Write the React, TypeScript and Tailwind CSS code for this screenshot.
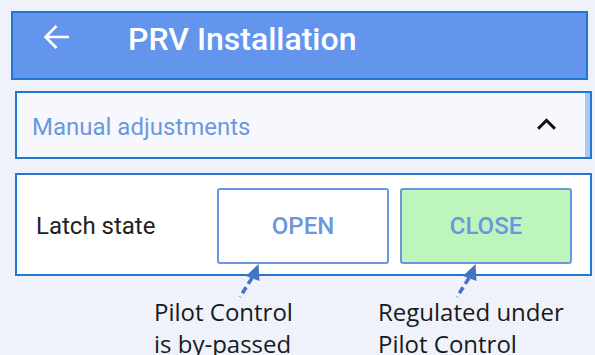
import React from "react";

export default function App() {
  return (
    <div
      className="relative w-[595px] h-[355px] overflow-hidden bg-[#eff2fa] pt-[11px]"
      style={{ fontFamily: "Roboto, 'Liberation Sans', sans-serif" }}
    >
      {/* Header */}
      <div className="ml-[11px] w-[577px] h-[69px] bg-[#6495ed] border-2 border-[#1f78d1] flex items-start pt-[8px] pl-[30px]">
        <svg width="26" height="24" viewBox="0 0 26 24" className="mt-[4px] shrink-0">
          <path d="M26 12H2.5M13.5 1L2.5 12L13.5 23" fill="none" stroke="#ffffff" strokeWidth="2.6" />
        </svg>
        <div className="ml-[59px] text-[32px] leading-[37px] font-medium text-white">PRV Installation</div>
      </div>

      {/* Manual adjustments */}
      <div className="mt-[11px] ml-[15px] w-[577px] h-[68px] bg-[#f7f8fd] border-2 border-[#1f78d1] flex items-center pl-[15px]">
        <div className="pt-[4px] text-[24px] leading-[28px] text-[#6a98e0]">Manual adjustments</div>
        <div className="flex-1" />
        <svg width="19" height="12" viewBox="6 8 12 7.41" className="mb-[3px] shrink-0">
          <path d="M12 8l-6 6 1.41 1.41L12 10.83l4.59 4.58L18 14z" fill="#111111" />
        </svg>
        <div className="ml-[29px] w-[5px] h-full bg-[#aec6f0]" />
      </div>

      {/* Latch state */}
      <div className="mt-[14px] ml-[15px] w-[577px] h-[103px] bg-white border-2 border-[#1f78d1] flex items-center pl-[19px] pr-[18px] pt-[3px]">
        <div className="text-[24px] leading-[28px] text-[#222222]">Latch state</div>
        <div className="flex-1" />
        <div className="flex gap-[11px]">
          <div className="w-[172px] h-[76px] border-2 border-[#6b97de] rounded-[3px] bg-white flex items-center justify-center text-[24px] font-medium text-[#6b97de]">
            OPEN
          </div>
          <div className="w-[172px] h-[76px] border-2 border-[#6b97de] rounded-[3px] bg-[#bdf5bd] flex items-center justify-center text-[24px] font-medium text-[#6b97de]">
            CLOSE
          </div>
        </div>
      </div>

      {/* Annotations */}
      <div
        className="mt-[20px] flex text-[24px] leading-[32px] text-[#1a1a1a]"
        style={{ fontFamily: "'Open Sans', 'Noto Sans', sans-serif" }}
      >
        <div className="ml-[154px] w-[224px]">
          <div>Pilot Control</div>
          <div>is by-passed</div>
        </div>
        <div>
          <div>Regulated under</div>
          <div>Pilot Control</div>
        </div>
      </div>

      <svg className="absolute left-0 top-0 pointer-events-none" width="595" height="355" viewBox="0 0 595 355">
        <polygon points="258.5,264 246,276 259.5,281" fill="#4472c4" />
        <line x1="252" y1="278" x2="240" y2="297" stroke="#4472c4" strokeWidth="3.5" strokeDasharray="7 4" />
        <polygon points="475.5,264 463,276 476.5,281" fill="#4472c4" />
        <line x1="469" y1="278" x2="457" y2="297" stroke="#4472c4" strokeWidth="3.5" strokeDasharray="7 4" />
      </svg>
    </div>
  );
}
